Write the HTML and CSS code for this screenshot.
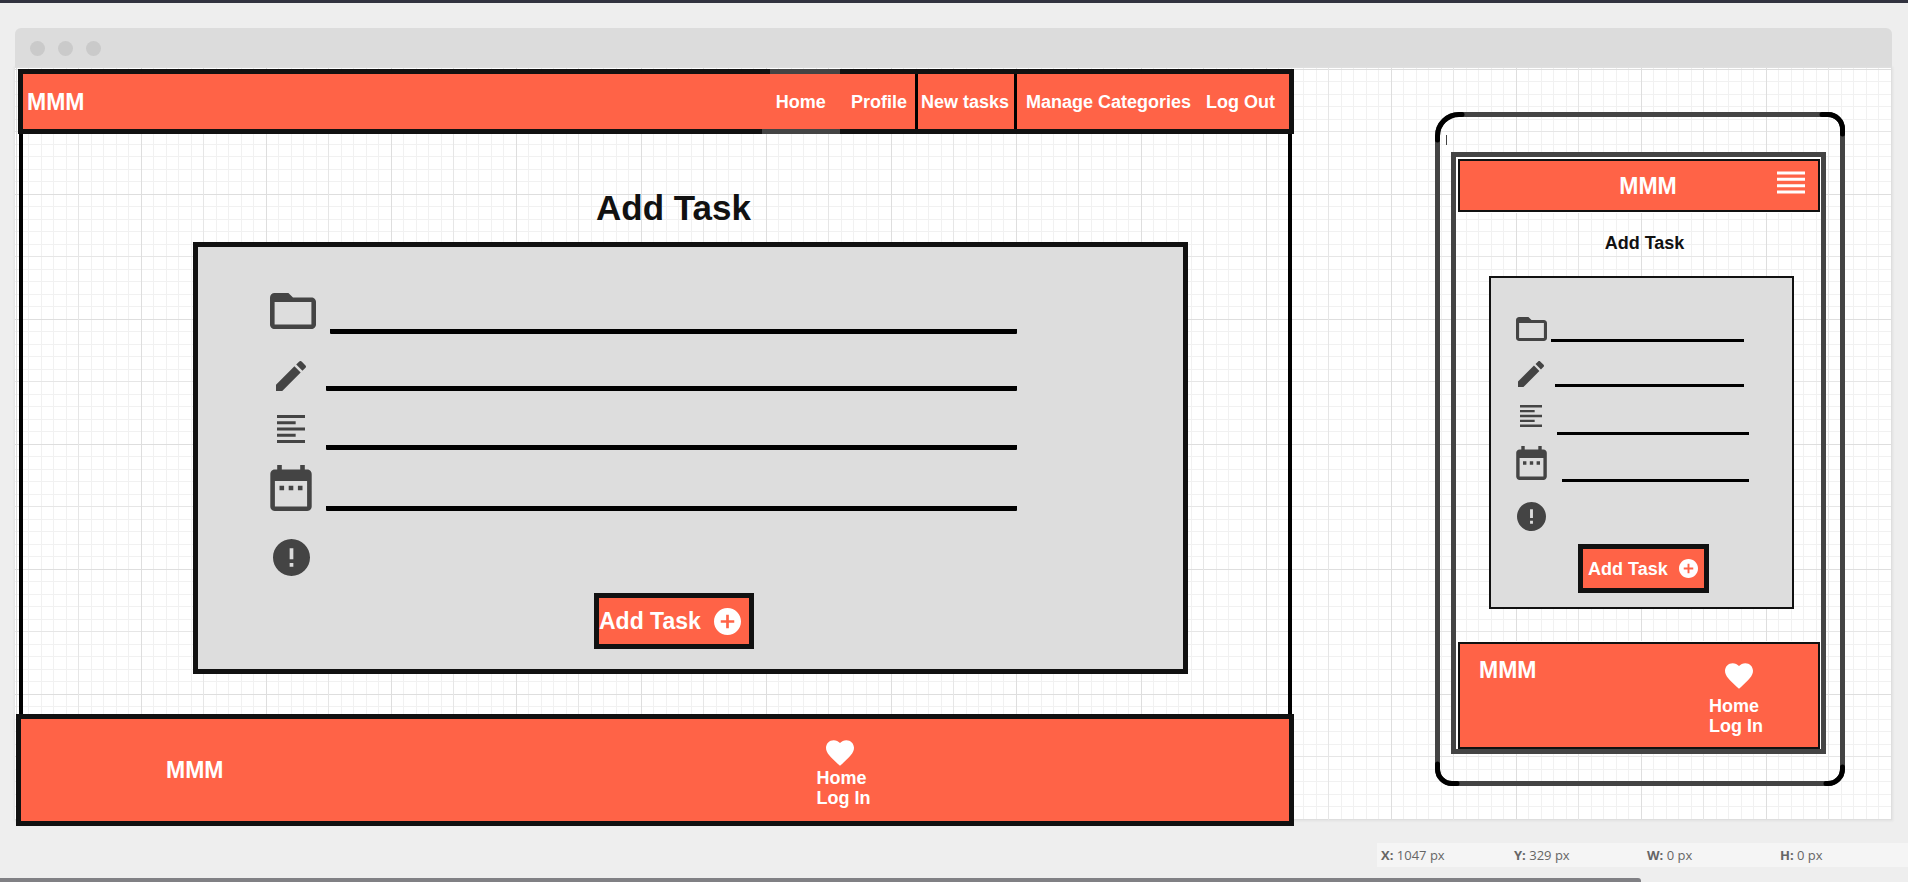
FILE: index.html
```html
<!DOCTYPE html>
<html lang="en">
<head>
<meta charset="utf-8">
<title>Add Task</title>
<link rel="stylesheet" href="styles.css">
</head>
<body>
<svg class="sprite" aria-hidden="true">
  <symbol id="folder" viewBox="2 4 20 16" preserveAspectRatio="none"><path d="M20 6h-8l-2-2H4c-1.1 0-1.99.9-1.99 2L2 18c0 1.1.9 2 2 2h16c1.1 0 2-.9 2-2V8c0-1.1-.9-2-2-2zm0 12H4V8h16v10z"/></symbol>
  <symbol id="pencil" viewBox="3 3 18 18"><path d="M3 17.25V21h3.75L17.81 9.94l-3.75-3.75L3 17.25zM20.71 7.04c.39-.39.39-1.02 0-1.41l-2.34-2.34c-.39-.39-1.02-.39-1.41 0l-1.83 1.83 3.75 3.75 1.83-1.83z"/></symbol>
  <symbol id="lines" viewBox="3 3 18 18"><path d="M15 15H3v2h12v-2zm0-8H3v2h12V7zM3 13h18v-2H3v2zm0 8h18v-2H3v2zM3 3v2h18V3H3z"/></symbol>
  <symbol id="calendar" viewBox="3 2 18 20"><path d="M9 11H7v2h2v-2zm4 0h-2v2h2v-2zm4 0h-2v2h2v-2zm2-7h-1V2h-2v2H8V2H6v2H5c-1.11 0-1.99.9-1.99 2L3 20c0 1.1.89 2 2 2h14c1.1 0 2-.9 2-2V6c0-1.1-.9-2-2-2zm0 16H5V9h14v11z"/></symbol>
  <symbol id="alert" viewBox="2 2 20 20"><path d="M12 2C6.48 2 2 6.48 2 12s4.48 10 10 10 10-4.48 10-10S17.52 2 12 2zm1 15h-2v-2h2v2zm0-4h-2V7h2v6z"/></symbol>
  <symbol id="plus" viewBox="2 2 20 20"><path d="M12 2C6.48 2 2 6.48 2 12s4.48 10 10 10 10-4.48 10-10S17.52 2 12 2zm5 11h-4v4h-2v-4H7v-2h4V7h2v4h4v2z"/></symbol>
  <symbol id="heart" viewBox="2 3 20 18.35"><path d="M12 21.35l-1.45-1.32C5.4 15.36 2 12.28 2 8.5 2 5.42 4.42 3 7.5 3c1.74 0 3.41.81 4.5 2.09C13.09 3.81 14.76 3 16.5 3 19.58 3 22 5.42 22 8.5c0 3.78-3.4 6.86-8.55 11.54L12 21.35z"/></symbol>
  <symbol id="menu" viewBox="0 0 28 22"><path d="M0 0h28v3H0zM0 6.3h28v3H0zM0 12.7h28v3H0zM0 19h28v3H0z"/></symbol>
</svg>

<main class="workspace">
  <div class="titlebar"><span class="dot"></span><span class="dot"></span><span class="dot"></span></div>
  <div class="canvas">

    <section class="desktop">
      <header class="desktop-header">
        <span class="brand">MMM</span>
        <nav class="nav">
          <a class="nav-link nav-link-home" href="#">Home</a>
          <a class="nav-link nav-link-profile" href="#">Profile</a>
          <a class="nav-link nav-link-active" href="#">New tasks</a>
          <a class="nav-link nav-link-manage" href="#">Manage Categories</a>
          <a class="nav-link nav-link-out" href="#">Log Out</a>
        </nav>
      </header>
      <div class="desktop-body">
        <h1 class="title">Add Task</h1>
        <form class="panel">
          <div class="field field-folder"><label class="slot" for="d-category"><svg class="icon icon-folder"><use href="#folder"/></svg></label><input class="line" id="d-category" aria-label="Category"></div>
          <div class="field field-pencil"><label class="slot" for="d-name"><svg class="icon icon-pencil"><use href="#pencil"/></svg></label><input class="line" id="d-name" aria-label="Name"></div>
          <div class="field field-lines"><label class="slot" for="d-text"><svg class="icon icon-lines"><use href="#lines"/></svg></label><input class="line" id="d-text" aria-label="Description"></div>
          <div class="field field-calendar"><label class="slot" for="d-date"><svg class="icon icon-calendar"><use href="#calendar"/></svg></label><input class="line" id="d-date" aria-label="Date"></div>
          <div class="field field-alert"><span class="slot"><svg class="icon icon-alert"><use href="#alert"/></svg></span></div>
          <button class="submit" type="button">Add Task<svg class="submit-icon"><use href="#plus"/></svg></button>
        </form>
      </div>
      <footer class="desktop-footer">
        <span class="brand">MMM</span>
        <div class="footer-links"><svg class="heart"><use href="#heart"/></svg><a href="#">Home</a><a href="#">Log In</a></div>
      </footer>
    </section>

    <section class="phone">
      <svg class="corner corner-tl" viewBox="0 0 30 30"><path d="M2.5 28V24A21.5 21.5 0 0 1 24 2.5H27"/></svg>
      <svg class="corner corner-tr" viewBox="0 0 30 30"><path d="M7 2.5H13A14.5 14.5 0 0 1 27.5 17V22"/></svg>
      <svg class="corner corner-bl" viewBox="0 0 30 30"><path d="M2.5 8V13A14.5 14.5 0 0 0 17 27.5H22"/></svg>
      <svg class="corner corner-br" viewBox="0 0 30 30"><path d="M27.5 11V13A14.5 14.5 0 0 1 13 27.5H11"/></svg>
      <div class="speaker"><span class="tick"></span></div>
      <div class="screen">
        <header class="phone-header">
          <span class="brand">MMM</span>
          <button class="menu" type="button" aria-label="Menu"><svg class="menu-icon"><use href="#menu"/></svg></button>
        </header>
        <h2 class="phone-title">Add Task</h2>
        <form class="phone-panel">
          <div class="field field-folder"><label class="slot" for="m-category"><svg class="icon icon-folder"><use href="#folder"/></svg></label><input class="line" id="m-category" aria-label="Category"></div>
          <div class="field field-pencil"><label class="slot" for="m-name"><svg class="icon icon-pencil"><use href="#pencil"/></svg></label><input class="line" id="m-name" aria-label="Name"></div>
          <div class="field field-lines"><label class="slot" for="m-text"><svg class="icon icon-lines"><use href="#lines"/></svg></label><input class="line" id="m-text" aria-label="Description"></div>
          <div class="field field-calendar"><label class="slot" for="m-date"><svg class="icon icon-calendar"><use href="#calendar"/></svg></label><input class="line" id="m-date" aria-label="Date"></div>
          <div class="field field-alert"><span class="slot"><svg class="icon icon-alert"><use href="#alert"/></svg></span></div>
          <button class="submit" type="button">Add Task<svg class="submit-icon"><use href="#plus"/></svg></button>
        </form>
        <footer class="phone-footer">
          <span class="brand">MMM</span>
          <div class="footer-links"><svg class="heart"><use href="#heart"/></svg><a href="#">Home</a><a href="#">Log In</a></div>
        </footer>
      </div>
    </section>
  </div>
</main>

<div class="status">
  <span class="metric"><b>X:</b> 1047 px</span>
  <span class="metric"><b>Y:</b> 329 px</span>
  <span class="metric"><b>W:</b> 0 px</span>
  <span class="metric"><b>H:</b> 0 px</span>
</div>
<div class="scrollbar"></div>
</body>
</html>
```

FILE: styles.css
```css
* { box-sizing: border-box; }

body {
  margin: 0;
  min-height: 100vh;
  display: flex;
  flex-direction: column;
  background: #eee;
  border-top: 3px solid #31323f;
  font-family: "Liberation Sans", Arial, sans-serif;
  font-size: 18px;
  line-height: 20px;
  color: #111;
}

a { color: inherit; text-decoration: none; }
svg { display: block; flex: none; fill: currentColor; }
.sprite { display: none; }

.workspace { padding: 25px 16px 0 15px; }

.titlebar {
  display: flex;
  align-items: center;
  gap: 13px;
  height: 40px;
  padding-left: 15px;
  background: #dcdcdc;
  border-radius: 6px 6px 0 0;
}
.dot { width: 15px; height: 15px; border-radius: 50%; background: #cacaca; }

/* Graph paper: fine lines every half of 25px, strong lines every half of 125px. */
.canvas {
  display: flex;
  align-items: flex-start;
  padding-top: 1px;
  background-color: #fff;
  background-image:
    linear-gradient(to right, #dedede 1px, transparent 1px, transparent 62px, #e6e6e6 62px, #e6e6e6 63px, transparent 63px),
    linear-gradient(to bottom, #dedede 1px, transparent 1px, transparent 62px, #e6e6e6 62px, #e6e6e6 63px, transparent 63px),
    linear-gradient(to right, #f1f1f1 1px, transparent 1px, transparent 12px, #f1f1f1 12px, #f1f1f1 13px, transparent 13px),
    linear-gradient(to bottom, #f1f1f1 1px, transparent 1px, transparent 12px, #f1f1f1 12px, #f1f1f1 13px, transparent 13px);
  background-size: 125px 125px, 125px 125px, 25px 25px, 25px 25px;
  background-position: 1px 1px;
  box-shadow: 0 0 2px 1px #e0e0e0;
}

.brand { font-size: 23px; line-height: 24px; font-weight: bold; color: #fff; }

/* Desktop frame */
.desktop { flex: 1; margin: 0 0 -6px 1px; }

.desktop-header {
  display: flex;
  align-items: center;
  justify-content: space-between;
  height: 65px;
  margin-left: 2px;
  padding-left: 4px;
  background: #ff6347;
  border: 5px solid #111;
}
.nav { display: flex; align-self: stretch; color: #fff; font-weight: bold; white-space: nowrap; }
.nav-link { display: flex; align-items: center; }
.nav-link-home { position: relative; padding: 0 14px 0 6px; }
.nav-link-home::before,
.nav-link-home::after { content: ""; position: absolute; right: 0; height: 5px; background: #444; }
.nav-link-home::before { left: 0; top: -5px; }
.nav-link-home::after { left: -8px; bottom: -5px; }
.nav-link-profile { padding: 0 8px 0 11px; }
.nav-link-active { padding: 0 5px 0 3px; border: solid #000; border-width: 0 3px; }
.nav-link-manage { padding: 0 15px 0 9px; }
.nav-link-out { padding-right: 14px; }

.desktop-body {
  margin: 0 2px 0 3px;
  padding: 53px 100px 40px 170px;
  border: solid #000;
  border-width: 0 4px;
}
/* The heading centres on the submit button, left of the panel's own centre. */
.title {
  margin: 0 0 13px;
  padding-right: 34px;
  font-size: 35px;
  line-height: 42px;
  text-align: center;
}

.panel {
  display: grid;
  grid-template-columns: minmax(0, 1fr);
  grid-template-rows: 87px 57px 59px 61px 65px;
  padding: 0 166px 20px 72px;
  background: #ddd;
  border: 5px solid #111;
}
.field { display: flex; align-items: flex-end; }
.slot { display: flex; justify-content: center; flex: none; color: #444; }
.line {
  flex: 1;
  min-width: 0;
  height: 28px;
  padding: 0;
  border: 0;
  background: linear-gradient(#000, #000) bottom / 100% 5px no-repeat;
  border-radius: 1px;
  font: inherit;
  outline: 0;
}

.panel .slot { min-width: 42px; margin-right: 14px; }
.panel .icon-folder { width: 46px; height: 36px; margin-bottom: 5px; }
.panel .icon-pencil { width: 30px; height: 30px; }
.panel .icon-lines { width: 28px; height: 28px; margin-bottom: 7px; }
.panel .icon-calendar { width: 42px; height: 46px; }
.panel .icon-alert { width: 37px; height: 37px; }

.submit {
  display: flex;
  align-items: center;
  justify-content: space-between;
  border: 5px solid #111;
  background: #ff6347;
  color: #fff;
  font: bold 18px/20px "Liberation Sans", Arial, sans-serif;
  white-space: nowrap;
}
.panel .submit {
  width: 160px;
  height: 56px;
  margin: 17px 0 0 324px;
  padding: 0 8px 0 0;
  font-size: 23px;
}
.panel .submit-icon { width: 27px; height: 27px; }

.desktop-footer {
  display: grid;
  grid-template-columns: 5fr 3fr;
  height: 112px;
  background: #ff6347;
  border: 5px solid #111;
}
.desktop-footer .brand { align-self: center; padding-left: 145px; }
.footer-links { display: flex; flex-direction: column; color: #fff; font-weight: bold; }
.heart { width: 28px; height: 26px; }
.desktop-footer .footer-links { padding: 21px 0 0 3px; }
.desktop-footer .heart { margin: 0 0 2px 9px; }

/* Phone frame */
.phone {
  position: relative;
  flex: none;
  width: 410px;
  margin: 43px 47px 0 141px;
  padding: 0 14px 27px 11px;
  border: 5px solid #444;
  border-radius: 24px 17px 17px 17px;
}
.corner { position: absolute; width: 30px; height: 30px; overflow: visible; fill: none; stroke: #000; stroke-width: 5; stroke-linecap: round; }
.corner-tl { left: -5px; top: -5px; }
.corner-tr { right: -5px; top: -5px; }
.corner-bl { left: -5px; bottom: -5px; }
.corner-br { right: -5px; bottom: -5px; }

.speaker { height: 35px; padding-top: 18px; }
.tick { display: block; width: 1px; height: 10px; margin-left: -5px; background: #444; }

.screen { border: 5px solid #444; }
.phone-header {
  display: grid;
  grid-template-columns: 1fr auto 1fr;
  align-items: center;
  height: 53px;
  margin: 2px 1px 0 2px;
  padding-left: 18px;
  background: #ff6347;
  border: 2px solid #111;
  box-shadow: 0 0 0 1px #fff, -1px -1px 0 1px #fff;
}
.phone-header .brand { grid-column: 2; }
.menu { justify-self: end; align-self: start; margin: 10px 13px 0 0; padding: 0; border: 0; background: none; color: #fff; }
.menu-icon { width: 28px; height: 23px; }

.phone-title { margin: 21px 0 23px 12px; font-size: 18px; line-height: 20px; text-align: center; }

.phone-panel {
  display: grid;
  grid-template-columns: minmax(0, 1fr);
  grid-template-rows: 64px 45px 48px 47px 49px;
  margin: 0 27px 33px 33px;
  padding: 0 43px 14px 24px;
  background: #ddd;
  border: 2px solid #111;
}
.phone-panel .slot { width: 32px; }
.phone-panel .line { height: 20px; background-size: 100% 3px; border-radius: 0; }
.phone-panel .icon-folder { width: 31px; height: 24px; margin-bottom: 1px; }
.phone-panel .icon-pencil { width: 26px; height: 26px; }
.phone-panel .icon-lines { width: 22px; height: 22px; margin-bottom: 8px; }
.phone-panel .icon-calendar { width: 31px; height: 34px; margin-bottom: 2px; }
.phone-panel .icon-alert { width: 29px; height: 29px; }
.phone-panel .field-folder { gap: 4px; padding-right: 5px; }
.phone-panel .field-pencil { gap: 8px; padding-right: 5px; }
.phone-panel .field-lines { gap: 10px; }
.phone-panel .field-calendar { gap: 15px; }
.phone-panel .submit { width: 131px; height: 49px; margin: 13px 0 0 63px; padding: 0 6px 0 5px; }
.phone-panel .submit-icon { width: 19px; height: 19px; }

.phone-footer {
  display: flex;
  justify-content: space-between;
  height: 107px;
  margin: 0 1px 0 2px;
  padding: 14px 55px 0 19px;
  background: #ff6347;
  border: 2px solid #111;
  box-shadow: 0 0 0 1px #fff, -1px 0 0 1px #fff;
  clip-path: inset(-1px -1px 0 -2px);
}
.phone-footer .footer-links { padding-top: 5px; }
.phone-footer .heart { margin: 0 0 7px 16px; }

/* Position read-out */
.status {
  display: flex;
  align-self: flex-end;
  height: 24px;
  margin-top: 23px;
  padding-left: 4px;
  align-items: center;
  background: #f5f5f5;
  color: #666;
  font: 13px/20px "Open Sans", "Noto Sans", sans-serif;
}
.metric { width: 133px; white-space: nowrap; }
.metric:last-child { width: 128px; }

.scrollbar { width: 86%; height: 4px; margin-top: auto; background: #808084; border-radius: 0 3px 0 0; }
```
